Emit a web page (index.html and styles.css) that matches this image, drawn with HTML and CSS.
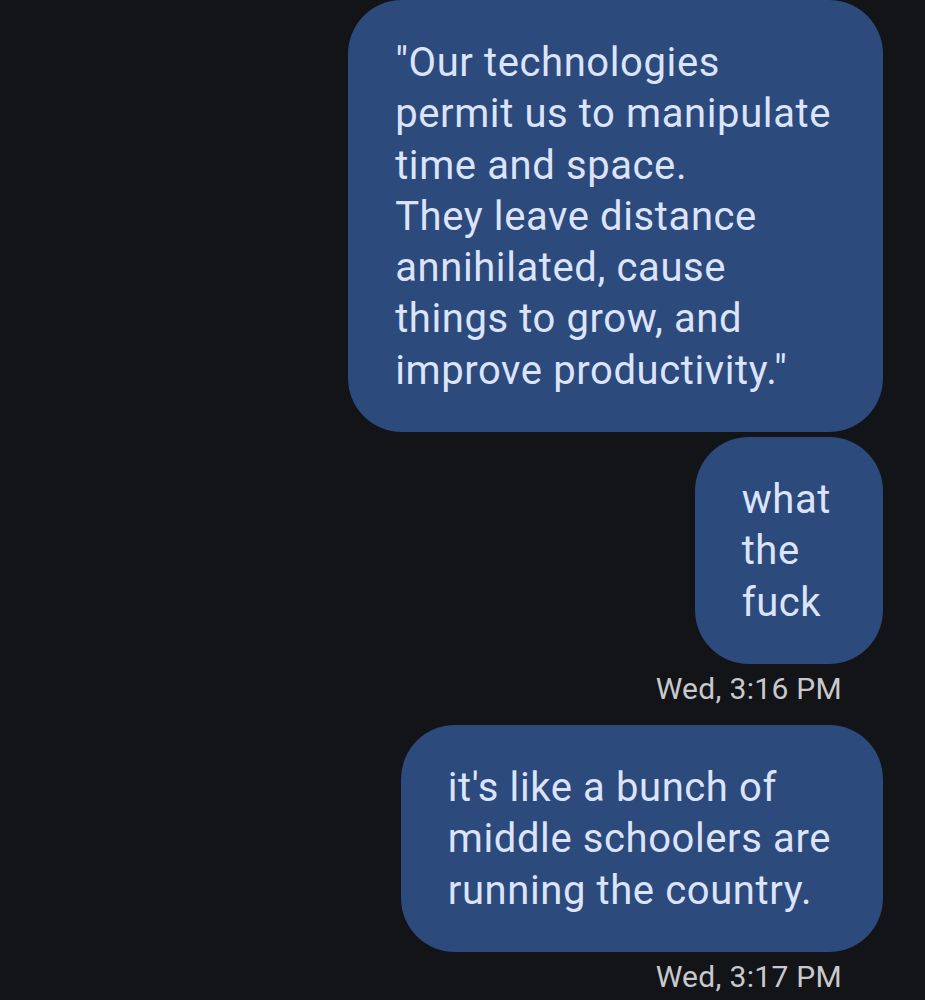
FILE: index.html
```html
<!doctype html>
<html lang="en">
<head>
<meta charset="utf-8">
<title>Messages</title>
<link rel="stylesheet" href="styles.css">
</head>

<body>

<!-- conversation -->
<main class="thread">
  <div class="bubble">"Our technologies<br>permit us to manipulate<br>time and space.<br>They leave distance<br>annihilated, cause<br>things to grow, and<br>improve productivity."</div>
  <div class="bubble">what<br>the<br>fuck</div>
  <div class="stamp">Wed, 3:16 PM</div>

  <div class="bubble">it's like a bunch of<br>middle schoolers are<br>running the country.</div>
  <div class="stamp">Wed, 3:17 PM</div>
</main>

</body>
</html>
```

FILE: styles.css
```css
:root{
  --bg:     #131417;   /* page background */
  --bubble: #2c4a7c;   /* outgoing bubble */
  --txt:    #dce4fb;   /* bubble text */
  --muted:  #c9c9cd;   /* timestamps */
}

* {
  box-sizing: border-box;
  margin: 0;
  padding: 0;
}
body {
  font-family: Roboto, 'Noto Sans', sans-serif;
  background: var(--bg);
  color: var(--txt);
  min-height: 100vh;
}

/* ── thread ────────────────────────────────────────────────────── */
.thread {
  display: flex;
  flex-direction: column;
  align-items: flex-end;
  padding: 0 42px;
}
.bubble {
  background: var(--bubble);
  border-radius: 54px;
  padding: 37px 52px 36px 47px;
  font-size: 40px;
  line-height: 51.3px;
  letter-spacing: .6px;
  margin-bottom: 5px;
}
.stamp {
  color: var(--muted);
  font-size: 30px;
  line-height: 38px;
  letter-spacing: .3px;
  margin: 1px 41px 17px 0;
}
```
